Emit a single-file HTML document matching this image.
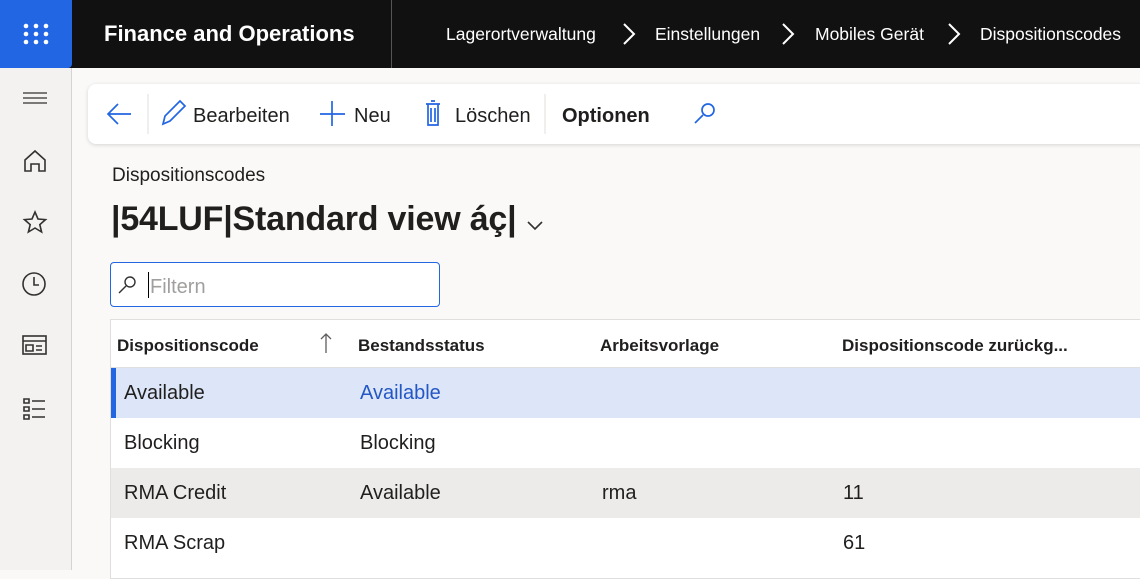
<!DOCTYPE html>
<html><head><style>
*{margin:0;padding:0;box-sizing:border-box}
body{width:1140px;height:570px;overflow:hidden;background:#faf9f8;font-family:"Liberation Sans",sans-serif;color:#201f1e;position:relative}
.top{position:absolute;left:0;top:0;width:1140px;height:68px;background:#111}
.waffle{position:absolute;left:0;top:0;width:72px;height:68px;background:#2266e3;border-radius:0 0 4px 0}
.app{position:absolute;left:104px;top:21px;color:#fff;font-weight:bold;font-size:22px}
.sep{position:absolute;left:391px;top:0;width:1px;height:68px;background:#555}
.bc{position:absolute;top:24px;color:#fff;font-size:17.5px}
.side{position:absolute;left:0;top:68px;width:72px;height:502px;background:#f3f2f1;border-right:1px solid #d6d4d2}
.tb{position:absolute;left:88px;top:84px;width:1070px;height:60px;background:#fff;border-radius:8px;box-shadow:0 1px 4px rgba(0,0,0,.15)}
.tb span{position:absolute;top:21px;font-size:20px}
.grid{position:absolute;left:110px;top:319px;width:1040px;height:260px;background:#fff;border:1px solid #e1dfdd}
.row{position:absolute;left:0;width:1040px;height:50px;font-size:20px}
.row span{position:absolute;top:14px}
.hd span{position:absolute;top:16px;font-size:17px;font-weight:bold}
</style></head><body>
<div class="top"></div>
<div class="waffle"><svg width="72" height="68"><g fill="#fff">
<circle cx="26" cy="26" r="2.3"/><circle cx="36" cy="26" r="2.3"/><circle cx="46" cy="26" r="2.3"/>
<circle cx="26" cy="34" r="2.3"/><circle cx="36" cy="34" r="2.3"/><circle cx="46" cy="34" r="2.3"/>
<circle cx="26" cy="42" r="2.3"/><circle cx="36" cy="42" r="2.3"/><circle cx="46" cy="42" r="2.3"/></g></svg></div>
<div class="app">Finance and Operations</div>
<div class="sep"></div>
<div class="bc" style="left:446px">Lagerortverwaltung</div>
<div class="bc" style="left:655px">Einstellungen</div>
<div class="bc" style="left:815px">Mobiles Gerät</div>
<div class="bc" style="left:980px">Dispositionscodes</div>
<svg style="position:absolute;left:0;top:0" width="1140" height="68"><g stroke="#fff" stroke-width="2" fill="none">
<path d="M624 24l10 10-10 10"/><path d="M783 24l10 10-10 10"/><path d="M949 24l10 10-10 10"/></g></svg>
<div class="side"></div>
<svg style="position:absolute;left:0;top:68px" width="72" height="360" fill="none" stroke="#323130" stroke-width="1.6">
<path d="M23 25h24M23 30h24M23 35h24" stroke-width="1.3"/>
<path d="M25 92l10-9 10 9v11h-6v-7h-8v7h-6z"/>
<path d="M35 144l3 7 7.5.6-5.7 5 1.8 7.4-6.6-4-6.6 4 1.8-7.4-5.7-5 7.5-.6z"/>
<circle cx="34" cy="216" r="11"/><path d="M34 209v8h5"/>
<rect x="23" y="268" width="23" height="18"/><path d="M23 273h23M26 277h7v6h-7zM36 278h6M36 282h6"/>
<path d="M24 331h5v4h-5zM24 339h5v4h-5zM24 347h5v4h-5zM32 333h13M32 341h13M32 349h13"/>
</svg>
<div class="tb">
<svg style="position:absolute;left:0;top:0" width="640" height="60" fill="none" stroke="#2266e3" stroke-width="1.7">
<path d="M43 30H20M30 20L20 30l10 10"/>
<path d="M60 10v40" stroke="#e1dfdd" stroke-width="1"/>
<path d="M75 40l2-8 15-15 5 5-15 15z"/>
<path d="M244 17v25M232 30h25"/>
<path d="M338 20h14M343 17h4M340 20v21h10V20M343 24v14M347 24v14"/>
<path d="M457 10v40" stroke="#e1dfdd" stroke-width="1"/>
<circle cx="620" cy="26" r="6"/><path d="M615 31l-8 8"/>
</svg>
<span style="left:105px">Bearbeiten</span>
<span style="left:266px">Neu</span>
<span style="left:367px">Löschen</span>
<span style="left:474px;font-weight:bold">Optionen</span>
</div>
<div style="position:absolute;left:112px;top:165px;font-size:19px">Dispositionscodes</div>
<div style="position:absolute;left:111px;top:200px;font-size:34px;font-weight:bold;letter-spacing:-.2px">|54LUF|Standard view áç|</div>
<svg style="position:absolute;left:525px;top:218px" width="20" height="14"><path d="M3 4l7 7 7-7" stroke="#323130" stroke-width="1.6" fill="none"/></svg>
<div style="position:absolute;left:110px;top:262px;width:330px;height:45px;background:#fff;border:1px solid #2266e3;border-radius:4px"></div>
<svg style="position:absolute;left:115px;top:272px" width="30" height="26" fill="none" stroke="#323130" stroke-width="1.4"><circle cx="15" cy="10" r="5"/><path d="M11 14l-7 7"/></svg>
<div style="position:absolute;left:148px;top:272px;width:1px;height:26px;background:#000"></div>
<div style="position:absolute;left:150px;top:276px;font-size:20px;color:#a19f9d">Filtern</div>
<div class="grid">
<div class="row hd" style="top:0;height:48px;border-bottom:1px solid #e1dfdd">
<span style="left:6px">Dispositionscode</span>
<span style="left:247px">Bestandsstatus</span><span style="left:489px">Arbeitsvorlage</span><span style="left:731px">Dispositionscode zurückg...</span>
</div>
<svg style="position:absolute;left:208px;top:12px" width="14" height="22"><path d="M7 2v19M2 7l5-5 5 5" stroke="#605e5c" stroke-width="1.3" fill="none"/></svg>
<div class="row" style="top:48px;background:#dce6f8;border-left:5px solid #2266e3"><span style="left:8px">Available</span><span style="left:244px;color:#2457c5">Available</span></div>
<div class="row" style="top:98px"><span style="left:13px">Blocking</span><span style="left:249px">Blocking</span></div>
<div class="row" style="top:148px;background:#edebe9"><span style="left:13px">RMA Credit</span><span style="left:249px">Available</span><span style="left:491px">rma</span><span style="left:732px">11</span></div>
<div class="row" style="top:198px"><span style="left:13px">RMA Scrap</span><span style="left:732px">61</span></div>
</div>
</body></html>
